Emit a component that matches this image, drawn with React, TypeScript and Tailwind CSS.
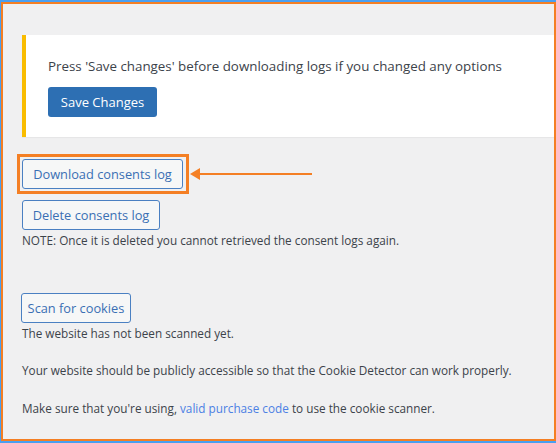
import React from 'react';

const font = { fontFamily: '"Open Sans", "Noto Sans", sans-serif' };

const OutlineButton: React.FC<{ label: string; width: string }> = ({ label, width }) => (
  <button className={`${width} h-[30px] rounded-[3px] border border-[#4a80c2] bg-[#f6f7f7] text-[#3a6fb4] text-[12.8px] leading-none`}>
    {label}
  </button>
);

export default function App() {
  return (
    <div className="w-[556px] h-[443px] flex border-t-2 border-l border-b-2 border-[#4a9ff0]" style={font}>
      <div className="flex-1 flex flex-col border-2 border-[#f47f24] bg-[#f0f0f1] overflow-hidden pl-[19px] text-[11.75px] text-[#3c434a]">
        <div className="mt-[31px] -mr-[2px] h-[102px] bg-white border-l-4 border-[#f9bc00] shadow-[0_1px_1px_rgba(0,0,0,0.04)] pl-[22px] pt-[21px]">
          <p className="leading-5 text-[13.35px]">Press 'Save changes' before downloading logs if you changed any options</p>
          <button className="mt-[11px] w-[109px] h-[30px] rounded-[3px] bg-[#2d6fb3] text-white text-[13px] leading-none">
            Save Changes
          </button>
        </div>

        <div className="mt-[17px] flex items-center">
          <div className="-ml-[5px] p-[2px] pr-[3px] border-[3px] border-[#f47f24]">
            <OutlineButton label="Download consents log" width="w-[161px]" />
          </div>
          <svg width="124" height="14" viewBox="0 0 124 14" className="ml-[1px]">
            <polygon points="0,7 10,1 10,13" fill="#f47f24" />
            <line x1="9" y1="7" x2="122" y2="7" stroke="#f47f24" strokeWidth="2" />
          </svg>
        </div>

        <div className="mt-[6px]">
          <OutlineButton label="Delete consents log" width="w-[138px]" />
        </div>
        <p className="leading-5">NOTE: Once it is deleted you cannot retrieved the consent logs again.</p>

        <div className="mt-[43px] -ml-[1px]">
          <OutlineButton label="Scan for cookies" width="w-[110px]" />
        </div>
        <p className="leading-5">The website has not been scanned yet.</p>
        <p className="leading-5 mt-[17px]">Your website should be publicly accessible so that the Cookie Detector can work properly.</p>
        <p className="leading-5 mt-[18px]">
          Make sure that you're using, <a className="text-[#4c80e4]">valid purchase code</a> to use the cookie scanner.
        </p>
      </div>
    </div>
  );
}
